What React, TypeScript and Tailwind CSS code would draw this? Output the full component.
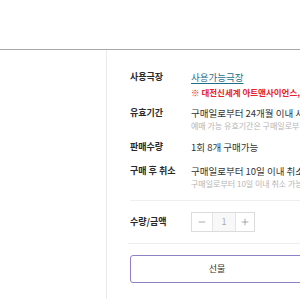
import { Minus, Plus } from 'lucide-react';

const FONT = { fontFamily: '"Noto Sans CJK KR", "Noto Sans", sans-serif' };

export default function App() {
  return (
    <div style={FONT} className="w-[300px] h-[300px] bg-white overflow-hidden text-[#333]">
      {/* Top strip */}
      <div className="h-[50px] border-b border-[#a8a8a8]" />

      <div className="flex h-[249px]">
        {/* Left column */}
        <div className="w-[107px] shrink-0 border-r border-[#ebebeb]" />

        {/* Info panel */}
        <div className="flex-1 min-w-0 pl-[23px] whitespace-nowrap overflow-hidden">
          <div className="pt-[20px] flex">
            <div className="w-[61px] shrink-0 text-[9px] leading-[14px] font-bold text-[#2a2a2a]">사용극장</div>
            <div>
              <div className="text-[9.5px] leading-[14px] text-[#1d6f8b] underline underline-offset-2">사용가능극장</div>
              <div className="mt-px text-[8.5px] leading-[14px] font-bold text-[#e8212b]">
                ※ 대전신세계 아트앤사이언스, 천안펜타포트 사용 불가
              </div>
            </div>
          </div>

          <div className="mt-[7px] flex">
            <div className="w-[61px] shrink-0 text-[9px] leading-[14px] font-bold text-[#2a2a2a]">유효기간</div>
            <div>
              <div className="text-[9.5px] leading-[14px]">구매일로부터 24개월 이내 사용 가능</div>
              <div className="text-[8px] leading-[12px] text-[#b5b5b5]">예매 가능 유효기간은 구매일로부터 5년 입니다.</div>
            </div>
          </div>

          <div className="mt-[8px] flex">
            <div className="w-[61px] shrink-0 text-[9px] leading-[14px] font-bold text-[#2a2a2a]">판매수량</div>
            <div className="text-[9.5px] leading-[14px]">1회 8개 구매가능</div>
          </div>

          <div className="mt-[10px] flex">
            <div className="w-[61px] shrink-0 text-[9px] leading-[14px] font-bold text-[#2a2a2a]">구매 후 취소</div>
            <div>
              <div className="text-[9.5px] leading-[14px]">구매일로부터 10일 이내 취소 가능</div>
              <div className="text-[8px] leading-[12px] text-[#b5b5b5]">구매일로부터 10일 이내 취소 가능하며, 부분취소는 불가능합니다.</div>
            </div>
          </div>

          <div className="mt-[10px] h-px bg-[#eeeeee]" />

          <div className="h-[42px] flex items-center">
            <div className="w-[61px] shrink-0 text-[9px] font-bold text-[#2a2a2a]">수량/금액</div>
            <div className="flex h-[20px] border border-[#dcdcdc]">
              <div className="w-[20px] flex items-center justify-center text-[#777]">
                <Minus size={10} strokeWidth={1.5} />
              </div>
              <div className="w-[24px] flex items-center justify-center border-x border-[#e4e4e4] bg-[#f8f8f8] text-[9px] text-[#aaa]">
                1
              </div>
              <div className="w-[18px] flex items-center justify-center text-[#777]">
                <Plus size={10} strokeWidth={1.5} />
              </div>
            </div>
          </div>

          <div className="h-px bg-[#eeeeee] -ml-[2px]" />

          <div className="mt-[11px] w-[174px] h-[28px] border border-[#8f80c6] rounded-[3px] flex items-center justify-center text-[9px] text-[#333]">
            선물
          </div>
        </div>
      </div>
    </div>
  );
}
